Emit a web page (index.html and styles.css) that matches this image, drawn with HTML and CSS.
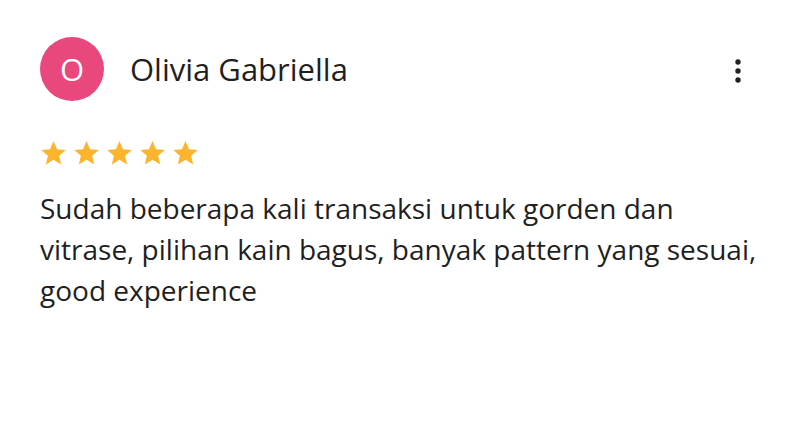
FILE: index.html
```html
<!DOCTYPE html>
<html lang="id">
<head>
  <meta charset="UTF-8" />
  <title>Ulasan</title>
  <link rel="stylesheet" href="styles.css">
</head>
<body>
  <div class="review">
    <div class="review-head">
      <div class="avatar">O</div>
      <div class="name">Olivia Gabriella</div>
      <div class="more">
        <svg width="8" height="26" viewBox="0 0 8 26"><circle cx="4" cy="4" r="2.7" fill="#202124"/><circle cx="4" cy="13" r="2.7" fill="#202124"/><circle cx="4" cy="22" r="2.7" fill="#202124"/></svg>
      </div>
    </div>

    <div class="stars">
      <svg class="star" viewBox="0 0 24 24"><path d="M12 1.8l3.1 7.2 7.8.7-5.9 5.2 1.8 7.7L12 18.5l-6.8 4.1 1.8-7.7-5.9-5.2 7.8-.7z"/></svg>
      <svg class="star" viewBox="0 0 24 24"><path d="M12 1.8l3.1 7.2 7.8.7-5.9 5.2 1.8 7.7L12 18.5l-6.8 4.1 1.8-7.7-5.9-5.2 7.8-.7z"/></svg>
      <svg class="star" viewBox="0 0 24 24"><path d="M12 1.8l3.1 7.2 7.8.7-5.9 5.2 1.8 7.7L12 18.5l-6.8 4.1 1.8-7.7-5.9-5.2 7.8-.7z"/></svg>
      <svg class="star" viewBox="0 0 24 24"><path d="M12 1.8l3.1 7.2 7.8.7-5.9 5.2 1.8 7.7L12 18.5l-6.8 4.1 1.8-7.7-5.9-5.2 7.8-.7z"/></svg>
      <svg class="star" viewBox="0 0 24 24"><path d="M12 1.8l3.1 7.2 7.8.7-5.9 5.2 1.8 7.7L12 18.5l-6.8 4.1 1.8-7.7-5.9-5.2 7.8-.7z"/></svg>
    </div>

    <p class="text">Sudah beberapa kali transaksi untuk gorden dan vitrase, pilihan kain bagus, banyak pattern yang sesuai, good experience</p>
  </div>
</body>
</html>
```

FILE: styles.css
```css
body { margin: 0; background: #fff; font-family: "Open Sans", Roboto, sans-serif; color: #1f1f1f; }
.review { padding: 37px 0 0 40px; }
.review-head { display: flex; align-items: center; padding-right: 52px; }
.avatar { width: 64px; height: 64px; border-radius: 50%; background: #e8487c; color: #fff; font-size: 31px; font-weight: 500; display: flex; align-items: center; justify-content: center; }
.name { flex: 1; margin-left: 26px; font-size: 31px; }
.more { width: 20px; display: flex; justify-content: center; margin-top: 4px; }
.stars { display: flex; gap: 6px; margin-top: 38px; }
.star { width: 27px; height: 27px; fill: #fbb52c; }
.text { margin: 22px 0 0; width: 726px; font-size: 28px; line-height: 41px; }
```
